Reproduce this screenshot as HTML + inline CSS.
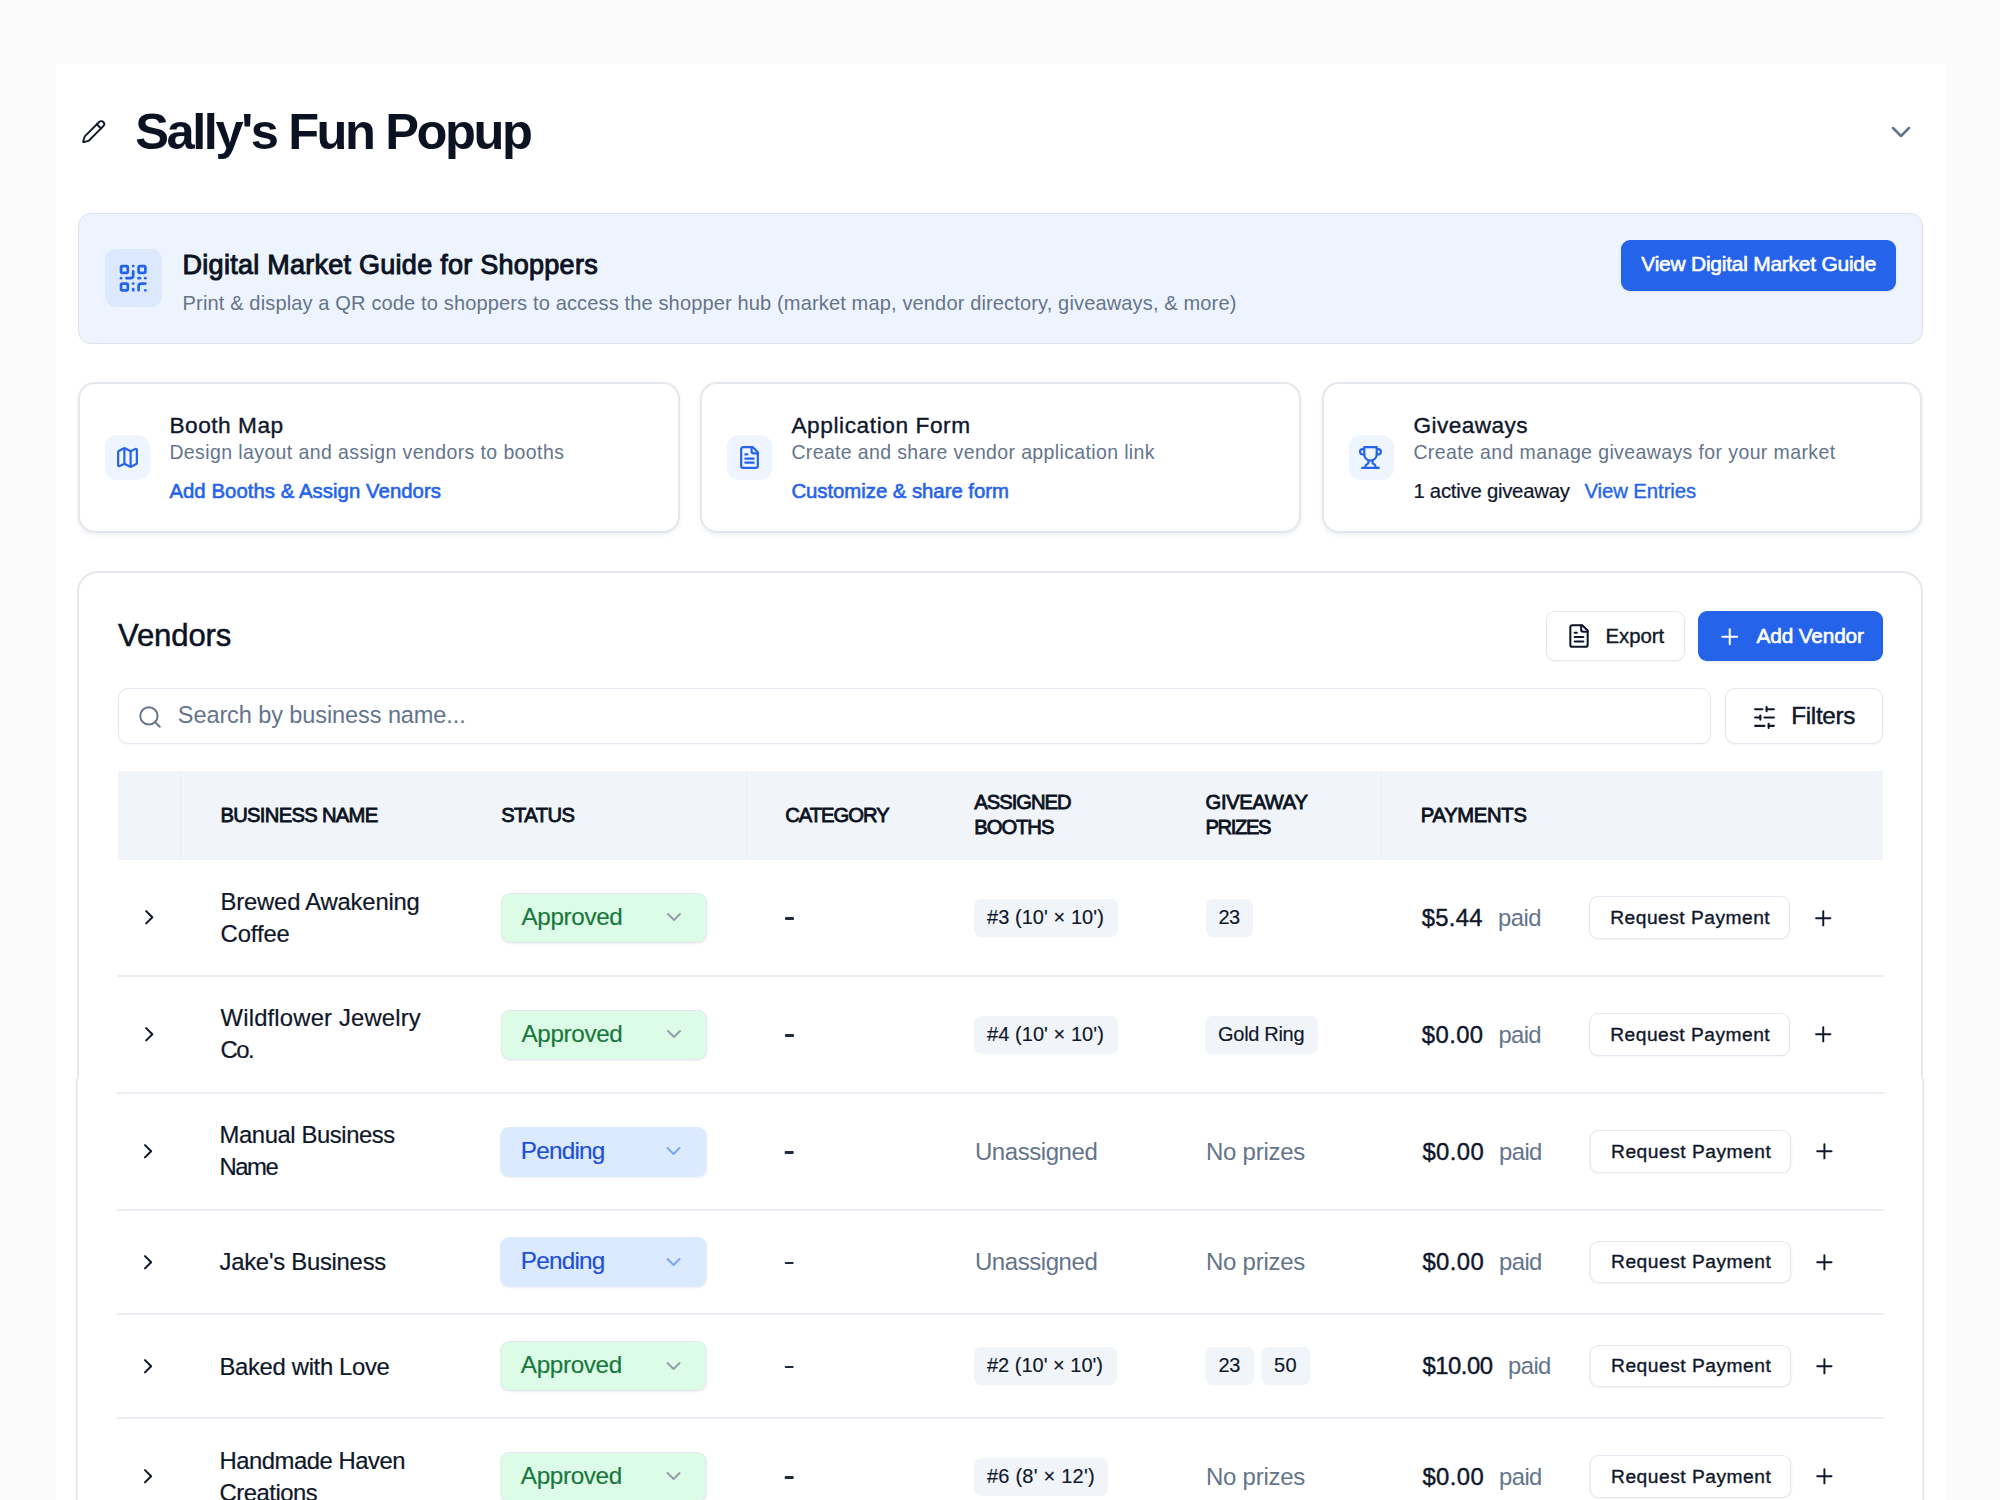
<!DOCTYPE html>
<html><head><meta charset="utf-8"><style>
html,body{margin:0;padding:0;}
body{width:2000px;height:1500px;overflow:hidden;position:relative;background-color:#fbfbfc;
font-family:"Liberation Sans", sans-serif;}
.t{position:absolute;white-space:nowrap;line-height:1;}
.r{position:absolute;}
.i{position:absolute;overflow:visible;}
</style></head><body>
<div class="r" style="left:56px;top:63.6px;width:1889.5px;height:1436.4px;background:#ffffff;"></div>
<svg class="i" style="left:80.6px;top:118.9px;" width="25.3" height="25.3" viewBox="0 0 24 24" fill="none" stroke="#0f172a" stroke-width="1.75" stroke-linecap="round" stroke-linejoin="round"><path d="M21.174 6.812a1 1 0 0 0-3.986-3.987L3.842 16.174a2 2 0 0 0-.5.83l-1.321 4.352a.5.5 0 0 0 .623.622l4.353-1.32a2 2 0 0 0 .83-.497z"/><path d="m15 5 4 4"/></svg>
<div class="t" style="left:135.20px;top:106.88px;font-size:50.58px;letter-spacing:-2.420px;color:#0b1222;font-weight:700;">Sally's Fun Popup</div>
<svg class="i" style="left:1885px;top:116px;" width="32" height="32" viewBox="0 0 24 24" fill="none" stroke="#64748b" stroke-width="1.9" stroke-linecap="round" stroke-linejoin="round"><path d="m6 9 6 6 6-6"/></svg>
<div class="r" style="left:78px;top:213px;width:1845px;height:131px;background:#eef4fe;border:1.5px solid #dde3ec;border-radius:13px;box-sizing:border-box;"></div>
<div class="r" style="left:105px;top:249px;width:57px;height:58px;background:#dbe8fe;border-radius:11px;"></div>
<svg class="i" style="left:117px;top:261.5px;" width="32.4" height="32.4" viewBox="0 0 24 24" fill="none" stroke="#2563eb" stroke-width="2" stroke-linecap="round" stroke-linejoin="round"><rect width="5" height="5" x="3" y="3" rx="1"/><rect width="5" height="5" x="16" y="3" rx="1"/><rect width="5" height="5" x="3" y="16" rx="1"/><path d="M21 16h-3a2 2 0 0 0-2 2v3"/><path d="M21 21v.01"/><path d="M12 7v3a2 2 0 0 1-2 2H7"/><path d="M3 12h.01"/><path d="M12 3h.01"/><path d="M12 16v.01"/><path d="M16 12h1"/><path d="M21 12v.01"/><path d="M12 21v-1"/></svg>
<div class="t" style="left:182.60px;top:251.51px;font-size:27.03px;letter-spacing:0.254px;color:#0b1222;font-weight:400;-webkit-text-stroke:0.95px #0b1222;">Digital Market Guide for Shoppers</div>
<div class="t" style="left:182.60px;top:292.82px;font-size:20.06px;letter-spacing:0.130px;color:#64748b;font-weight:400;">Print &amp; display a QR code to shoppers to access the shopper hub (market map, vendor directory, giveaways, &amp; more)</div>
<div class="r" style="left:1621px;top:240px;width:275px;height:51px;background:#2563eb;border-radius:9px;box-shadow:0 1px 2px rgba(0,0,0,.08);"></div>
<div class="t" style="left:1641.30px;top:253.58px;font-size:20.93px;letter-spacing:-0.216px;color:#ffffff;font-weight:400;-webkit-text-stroke:0.6px #ffffff;">View Digital Market Guide</div>
<div class="r" style="left:78px;top:382px;width:602px;height:151px;background:#fff;border:2px solid #e3e8ef;border-radius:17px;box-sizing:border-box;box-shadow:0 2px 4px rgba(15,23,42,.07);"></div>
<div class="r" style="left:105px;top:435px;width:45px;height:45px;background:#eff5ff;border-radius:12px;"></div>
<svg class="i" style="left:115.2px;top:445px;" width="25" height="25" viewBox="0 0 24 24" fill="none" stroke="#2563eb" stroke-width="2.1" stroke-linecap="round" stroke-linejoin="round"><path d="M14.106 5.553a2 2 0 0 0 1.788 0l3.659-1.83A1 1 0 0 1 21 4.619v12.764a1 1 0 0 1-.553.894l-4.553 2.277a2 2 0 0 1-1.788 0l-4.212-2.106a2 2 0 0 0-1.788 0l-3.659 1.83A1 1 0 0 1 3 19.381V6.618a1 1 0 0 1 .553-.894l4.553-2.277a2 2 0 0 1 1.788 0z"/><path d="M15 5.764v15"/><path d="M9 3.236v15"/></svg>
<div class="t" style="left:169.40px;top:413.81px;font-size:22.67px;letter-spacing:0.521px;color:#0f172a;font-weight:400;-webkit-text-stroke:0.35px #0f172a;">Booth Map</div>
<div class="t" style="left:169.40px;top:443.11px;font-size:19.48px;letter-spacing:0.409px;color:#64748b;font-weight:400;">Design layout and assign vendors to booths</div>
<div class="t" style="left:169.40px;top:481.37px;font-size:20.35px;letter-spacing:0.049px;color:#2563eb;font-weight:400;-webkit-text-stroke:0.6px #2563eb;">Add Booths &amp; Assign Vendors</div>
<div class="r" style="left:700px;top:382px;width:601px;height:151px;background:#fff;border:2px solid #e3e8ef;border-radius:17px;box-sizing:border-box;box-shadow:0 2px 4px rgba(15,23,42,.07);"></div>
<div class="r" style="left:727px;top:435px;width:45px;height:45px;background:#eff5ff;border-radius:12px;"></div>
<svg class="i" style="left:737.2px;top:445px;" width="25" height="25" viewBox="0 0 24 24" fill="none" stroke="#2563eb" stroke-width="2.1" stroke-linecap="round" stroke-linejoin="round"><path d="M15 2H6a2 2 0 0 0-2 2v16a2 2 0 0 0 2 2h12a2 2 0 0 0 2-2V7Z"/><path d="M14 2v4a2 2 0 0 0 2 2h4"/><path d="M10 9H8"/><path d="M16 13H8"/><path d="M16 17H8"/></svg>
<div class="t" style="left:791.40px;top:413.81px;font-size:22.67px;letter-spacing:0.582px;color:#0f172a;font-weight:400;-webkit-text-stroke:0.35px #0f172a;">Application Form</div>
<div class="t" style="left:791.40px;top:443.11px;font-size:19.48px;letter-spacing:0.374px;color:#64748b;font-weight:400;">Create and share vendor application link</div>
<div class="t" style="left:791.40px;top:481.37px;font-size:20.35px;letter-spacing:-0.035px;color:#2563eb;font-weight:400;-webkit-text-stroke:0.6px #2563eb;">Customize &amp; share form</div>
<div class="r" style="left:1322px;top:382px;width:600px;height:151px;background:#fff;border:2px solid #e3e8ef;border-radius:17px;box-sizing:border-box;box-shadow:0 2px 4px rgba(15,23,42,.07);"></div>
<div class="r" style="left:1349px;top:435px;width:45px;height:45px;background:#eff5ff;border-radius:12px;"></div>
<svg class="i" style="left:1357.9px;top:445px;" width="25" height="25" viewBox="0 0 24 24" fill="none" stroke="#2563eb" stroke-width="2.1" stroke-linecap="round" stroke-linejoin="round"><path d="M6 9H4.5a2.5 2.5 0 0 1 0-5H6"/><path d="M18 9h1.5a2.5 2.5 0 0 0 0-5H18"/><path d="M4 22h16"/><path d="M10 14.66V17c0 .55-.47.98-.97 1.21C7.85 18.75 7 20.24 7 22"/><path d="M14 14.66V17c0 .55.47.98.97 1.21C16.15 18.75 17 20.24 17 22"/><path d="M18 2H6v7a6 6 0 0 0 12 0V2Z"/></svg>
<div class="t" style="left:1413.40px;top:413.81px;font-size:22.67px;letter-spacing:0.428px;color:#0f172a;font-weight:400;-webkit-text-stroke:0.35px #0f172a;">Giveaways</div>
<div class="t" style="left:1413.40px;top:443.11px;font-size:19.48px;letter-spacing:0.404px;color:#64748b;font-weight:400;">Create and manage giveaways for your market</div>
<div class="t" style="left:1413.40px;top:481.37px;font-size:20.35px;letter-spacing:-0.253px;color:#0f172a;font-weight:400;-webkit-text-stroke:0.2px #0f172a;">1 active giveaway</div>
<div class="t" style="left:1584.40px;top:481.37px;font-size:20.35px;letter-spacing:-0.085px;color:#2563eb;font-weight:400;-webkit-text-stroke:0.35px #2563eb;">View Entries</div>
<div class="r" style="left:0;top:0;width:2000px;height:1079px;overflow:hidden;">
<div class="r" style="left:77px;top:571px;width:1846px;height:989px;background:#fff;border:2px solid #e3e8ef;border-radius:21px;box-sizing:border-box;"></div>
</div>
<div class="r" style="left:0;top:1079px;width:2000px;height:421px;overflow:hidden;"><div class="r" style="left:0;top:-1079px;width:2000px;height:1500px;transform:scaleX(1.0014);transform-origin:1000px 0;">
<div class="r" style="left:77px;top:571px;width:1846px;height:989px;background:#fff;border:2px solid #e3e8ef;border-radius:21px;box-sizing:border-box;"></div>
</div></div>
<div class="t" style="left:118.00px;top:620.27px;font-size:31.10px;letter-spacing:-0.126px;color:#0b1222;font-weight:400;-webkit-text-stroke:0.5px #0b1222;">Vendors</div>
<div class="r" style="left:1546px;top:611px;width:139px;height:50px;background:#fff;border:1.5px solid #e2e8f0;border-radius:9px;box-sizing:border-box;box-shadow:0 1px 2px rgba(15,23,42,.05);"></div>
<svg class="i" style="left:1566px;top:623px;" width="26" height="26" viewBox="0 0 24 24" fill="none" stroke="#0f172a" stroke-width="1.9" stroke-linecap="round" stroke-linejoin="round"><path d="M15 2H6a2 2 0 0 0-2 2v16a2 2 0 0 0 2 2h12a2 2 0 0 0 2-2V7Z"/><path d="M14 2v4a2 2 0 0 0 2 2h4"/><path d="M10 9H8"/><path d="M16 13H8"/><path d="M16 17H8"/></svg>
<div class="t" style="left:1605.50px;top:626.27px;font-size:20.35px;letter-spacing:-0.042px;color:#0f172a;font-weight:400;-webkit-text-stroke:0.35px #0f172a;">Export</div>
<div class="r" style="left:1698px;top:611px;width:185px;height:50px;background:#2563eb;border-radius:9px;box-shadow:0 1px 2px rgba(0,0,0,.08);"></div>
<svg class="i" style="left:1717px;top:623.5px;" width="25.5" height="25.5" viewBox="0 0 24 24" fill="none" stroke="#ffffff" stroke-width="1.9" stroke-linecap="round" stroke-linejoin="round"><path d="M5 12h14"/><path d="M12 5v14"/></svg>
<div class="t" style="left:1756.60px;top:625.91px;font-size:20.78px;letter-spacing:-0.133px;color:#ffffff;font-weight:400;-webkit-text-stroke:0.6px #ffffff;">Add Vendor</div>
<div class="r" style="left:118px;top:688px;width:1593px;height:56px;background:#fff;border:1.5px solid #e2e8f0;border-radius:10px;box-sizing:border-box;box-shadow:0 1px 2px rgba(15,23,42,.05);"></div>
<svg class="i" style="left:136.5px;top:703.5px;" width="26" height="26" viewBox="0 0 24 24" fill="none" stroke="#64748b" stroke-width="1.8" stroke-linecap="round" stroke-linejoin="round"><circle cx="11" cy="11" r="8"/><path d="m21 21-4.3-4.3"/></svg>
<div class="t" style="left:177.80px;top:704.27px;font-size:23.55px;letter-spacing:-0.103px;color:#64748b;font-weight:400;">Search by business name...</div>
<div class="r" style="left:1725px;top:688px;width:158px;height:56px;background:#fff;border:1.5px solid #e2e8f0;border-radius:10px;box-sizing:border-box;box-shadow:0 1px 2px rgba(15,23,42,.05);"></div>
<svg class="i" style="left:1752px;top:704.5px;" width="25" height="25" viewBox="0 0 24 24" fill="none" stroke="#0f172a" stroke-width="2" stroke-linecap="round" stroke-linejoin="round"><line x1="21" x2="14" y1="4" y2="4"/><line x1="10" x2="3" y1="4" y2="4"/><line x1="21" x2="12" y1="12" y2="12"/><line x1="8" x2="3" y1="12" y2="12"/><line x1="21" x2="16" y1="20" y2="20"/><line x1="12" x2="3" y1="20" y2="20"/><line x1="14" x2="14" y1="2" y2="6"/><line x1="8" x2="8" y1="10" y2="14"/><line x1="16" x2="16" y1="18" y2="22"/></svg>
<div class="t" style="left:1791.30px;top:703.85px;font-size:24.27px;letter-spacing:-0.337px;color:#0f172a;font-weight:400;-webkit-text-stroke:0.45px #0f172a;">Filters</div>
<div class="r" style="left:118px;top:771px;width:1765px;height:89px;background:#f1f5f9;"></div>
<div class="r" style="left:180px;top:771px;width:1px;height:89px;background:#e8edf3;"></div>
<div class="r" style="left:746px;top:771px;width:1px;height:89px;background:#e8edf3;"></div>
<div class="r" style="left:1381px;top:771px;width:1px;height:89px;background:#e8edf3;"></div>
<div class="t" style="left:220.40px;top:804.80px;font-size:20.20px;letter-spacing:-0.689px;color:#0b1222;font-weight:400;-webkit-text-stroke:0.8px #0b1222;">BUSINESS NAME</div>
<div class="t" style="left:501.20px;top:804.80px;font-size:20.20px;letter-spacing:-0.574px;color:#0b1222;font-weight:400;-webkit-text-stroke:0.8px #0b1222;">STATUS</div>
<div class="t" style="left:785.30px;top:804.80px;font-size:20.20px;letter-spacing:-1.018px;color:#0b1222;font-weight:400;-webkit-text-stroke:0.8px #0b1222;">CATEGORY</div>
<div class="t" style="left:974.30px;top:791.60px;font-size:20.20px;letter-spacing:-1.022px;color:#0b1222;font-weight:400;-webkit-text-stroke:0.8px #0b1222;">ASSIGNED</div>
<div class="t" style="left:974.30px;top:816.80px;font-size:20.20px;letter-spacing:-1.032px;color:#0b1222;font-weight:400;-webkit-text-stroke:0.8px #0b1222;">BOOTHS</div>
<div class="t" style="left:1205.50px;top:791.60px;font-size:20.20px;letter-spacing:-0.322px;color:#0b1222;font-weight:400;-webkit-text-stroke:0.8px #0b1222;">GIVEAWAY</div>
<div class="t" style="left:1205.50px;top:816.80px;font-size:20.20px;letter-spacing:-1.367px;color:#0b1222;font-weight:400;-webkit-text-stroke:0.8px #0b1222;">PRIZES</div>
<div class="t" style="left:1420.80px;top:804.80px;font-size:20.20px;letter-spacing:-0.284px;color:#0b1222;font-weight:400;-webkit-text-stroke:0.8px #0b1222;">PAYMENTS</div>
<div class="r" style="left:118px;top:975px;width:1765px;height:2px;background:#e9eef4;"></div>
<svg class="i" style="left:137px;top:905.3px;" width="24.5" height="24.5" viewBox="0 0 24 24" fill="none" stroke="#0f172a" stroke-width="2" stroke-linecap="round" stroke-linejoin="round"><path d="m9 18 6-6-6-6"/></svg>
<div class="t" style="left:220.60px;top:889.52px;font-size:23.84px;letter-spacing:-0.199px;color:#0f172a;font-weight:400;-webkit-text-stroke:0.2px #0f172a;">Brewed Awakening</div>
<div class="t" style="left:220.60px;top:921.52px;font-size:23.84px;letter-spacing:-0.109px;color:#0f172a;font-weight:400;-webkit-text-stroke:0.2px #0f172a;">Coffee</div>
<div class="r" style="left:501px;top:892.8px;width:206px;height:50.0px;background:#dcfce7;border:1.5px solid #e3e8ee;border-radius:9px;box-sizing:border-box;box-shadow:0 1px 2px rgba(15,23,42,.07);"></div>
<div class="t" style="left:521.50px;top:905.25px;font-size:24.27px;letter-spacing:-0.370px;color:#18773b;font-weight:400;-webkit-text-stroke:0.15px #18773b;">Approved</div>
<svg class="i" style="left:662px;top:905.4px;" width="24" height="24" viewBox="0 0 24 24" fill="none" stroke="#979eab" stroke-width="2.0" stroke-linecap="round" stroke-linejoin="round"><path d="m6 9 6 6 6-6"/></svg>
<div class="r" style="left:785.3px;top:917.3px;width:8.300000000000068px;height:2.6000000000000227px;background:#1e293b;border-radius:1px;"></div>
<div class="r" style="left:974px;top:898.8px;width:143.5px;height:38.0px;background:#f1f5f9;border-radius:7px;"></div>
<div class="t" style="left:987.00px;top:906.88px;font-size:19.99px;letter-spacing:0.064px;color:#0f172a;font-weight:400;-webkit-text-stroke:0.15px #0f172a;">#3 (10' × 10')</div>
<div class="r" style="left:1205.5px;top:898.8px;width:47.5px;height:38.0px;background:#f1f5f9;border-radius:7px;"></div>
<div class="t" style="left:1218.50px;top:906.88px;font-size:19.99px;letter-spacing:-0.684px;color:#0f172a;font-weight:400;-webkit-text-stroke:0.15px #0f172a;">23</div>
<div class="t" style="left:1421.80px;top:905.82px;font-size:23.84px;letter-spacing:0.272px;color:#0f172a;font-weight:400;-webkit-text-stroke:0.4px #0f172a;">$5.44</div>
<div class="t" style="left:1498.00px;top:905.82px;font-size:23.84px;letter-spacing:-0.484px;color:#64748b;font-weight:400;">paid</div>
<div class="r" style="left:1589px;top:896.3px;width:201px;height:42.5px;background:#fff;border:1.5px solid #e2e8f0;border-radius:9px;box-sizing:border-box;box-shadow:0 1px 2px rgba(15,23,42,.05);"></div>
<div class="t" style="left:1610.20px;top:908.06px;font-size:19.19px;letter-spacing:0.498px;color:#0f172a;font-weight:400;-webkit-text-stroke:0.35px #0f172a;">Request Payment</div>
<svg class="i" style="left:1810.5px;top:905.5999999999999px;" width="24.5" height="24.5" viewBox="0 0 24 24" fill="none" stroke="#0f172a" stroke-width="1.9" stroke-linecap="round" stroke-linejoin="round"><path d="M5 12h14"/><path d="M12 5v14"/></svg>
<svg class="i" style="left:137px;top:1022.0px;" width="24.5" height="24.5" viewBox="0 0 24 24" fill="none" stroke="#0f172a" stroke-width="2" stroke-linecap="round" stroke-linejoin="round"><path d="m9 18 6-6-6-6"/></svg>
<div class="t" style="left:220.60px;top:1006.22px;font-size:23.84px;letter-spacing:0.166px;color:#0f172a;font-weight:400;-webkit-text-stroke:0.2px #0f172a;">Wildflower Jewelry</div>
<div class="t" style="left:220.60px;top:1038.22px;font-size:23.84px;letter-spacing:-1.533px;color:#0f172a;font-weight:400;-webkit-text-stroke:0.2px #0f172a;">Co.</div>
<div class="r" style="left:501px;top:1009.5px;width:206px;height:50.0px;background:#dcfce7;border:1.5px solid #e3e8ee;border-radius:9px;box-sizing:border-box;box-shadow:0 1px 2px rgba(15,23,42,.07);"></div>
<div class="t" style="left:521.50px;top:1021.95px;font-size:24.27px;letter-spacing:-0.370px;color:#18773b;font-weight:400;-webkit-text-stroke:0.15px #18773b;">Approved</div>
<svg class="i" style="left:662px;top:1022.1px;" width="24" height="24" viewBox="0 0 24 24" fill="none" stroke="#979eab" stroke-width="2.0" stroke-linecap="round" stroke-linejoin="round"><path d="m6 9 6 6 6-6"/></svg>
<div class="r" style="left:785.3px;top:1034.0px;width:8.300000000000068px;height:2.599999999999909px;background:#1e293b;border-radius:1px;"></div>
<div class="r" style="left:974px;top:1015.5px;width:143.5999999999999px;height:38.0px;background:#f1f5f9;border-radius:7px;"></div>
<div class="t" style="left:987.00px;top:1023.58px;font-size:19.99px;letter-spacing:0.068px;color:#0f172a;font-weight:400;-webkit-text-stroke:0.15px #0f172a;">#4 (10' × 10')</div>
<div class="r" style="left:1205.1px;top:1015.5px;width:112.90000000000009px;height:38.0px;background:#f1f5f9;border-radius:7px;"></div>
<div class="t" style="left:1218.10px;top:1023.58px;font-size:19.99px;letter-spacing:-0.304px;color:#0f172a;font-weight:400;-webkit-text-stroke:0.15px #0f172a;">Gold Ring</div>
<div class="t" style="left:1421.80px;top:1022.52px;font-size:23.84px;letter-spacing:0.422px;color:#0f172a;font-weight:400;-webkit-text-stroke:0.4px #0f172a;">$0.00</div>
<div class="t" style="left:1498.40px;top:1022.52px;font-size:23.84px;letter-spacing:-0.617px;color:#64748b;font-weight:400;">paid</div>
<div class="r" style="left:1589px;top:1013.0px;width:201px;height:42.5px;background:#fff;border:1.5px solid #e2e8f0;border-radius:9px;box-sizing:border-box;box-shadow:0 1px 2px rgba(15,23,42,.05);"></div>
<div class="t" style="left:1610.20px;top:1024.76px;font-size:19.19px;letter-spacing:0.498px;color:#0f172a;font-weight:400;-webkit-text-stroke:0.35px #0f172a;">Request Payment</div>
<svg class="i" style="left:1810.5px;top:1022.3px;" width="24.5" height="24.5" viewBox="0 0 24 24" fill="none" stroke="#0f172a" stroke-width="1.9" stroke-linecap="round" stroke-linejoin="round"><path d="M5 12h14"/><path d="M12 5v14"/></svg>
<div class="r" style="left:0;top:0;width:2000px;height:1500px;transform:scaleX(1.0014);transform-origin:1000px 0;">
<div class="r" style="left:118px;top:1209px;width:1765px;height:2px;background:#e9eef4;"></div>
<div class="r" style="left:118px;top:1092px;width:1765px;height:2px;background:#e9eef4;"></div>
<svg class="i" style="left:137px;top:1139.0px;" width="24.5" height="24.5" viewBox="0 0 24 24" fill="none" stroke="#0f172a" stroke-width="2" stroke-linecap="round" stroke-linejoin="round"><path d="m9 18 6-6-6-6"/></svg>
<div class="t" style="left:220.60px;top:1123.42px;font-size:23.84px;letter-spacing:-0.423px;color:#0f172a;font-weight:400;-webkit-text-stroke:0.2px #0f172a;">Manual Business</div>
<div class="t" style="left:220.60px;top:1155.42px;font-size:23.84px;letter-spacing:-1.482px;color:#0f172a;font-weight:400;-webkit-text-stroke:0.2px #0f172a;">Name</div>
<div class="r" style="left:501px;top:1126.5px;width:206px;height:50.0px;background:#dbeafe;border:none;border-radius:9px;box-sizing:border-box;box-shadow:0 1px 2px rgba(15,23,42,.07);"></div>
<div class="t" style="left:521.50px;top:1138.95px;font-size:24.27px;letter-spacing:-0.780px;color:#1d4ed8;font-weight:400;-webkit-text-stroke:0.15px #1d4ed8;">Pending</div>
<svg class="i" style="left:662px;top:1139.1px;" width="24" height="24" viewBox="0 0 24 24" fill="none" stroke="#7ea6f2" stroke-width="2.0" stroke-linecap="round" stroke-linejoin="round"><path d="m6 9 6 6 6-6"/></svg>
<div class="r" style="left:785.3px;top:1151.0px;width:8.300000000000068px;height:2.599999999999909px;background:#1e293b;border-radius:1px;"></div>
<div class="t" style="left:975.00px;top:1139.70px;font-size:23.98px;letter-spacing:-0.436px;color:#64748b;font-weight:400;">Unassigned</div>
<div class="t" style="left:1205.70px;top:1139.50px;font-size:23.98px;letter-spacing:-0.253px;color:#64748b;font-weight:400;">No prizes</div>
<div class="t" style="left:1421.80px;top:1139.52px;font-size:23.84px;letter-spacing:0.422px;color:#0f172a;font-weight:400;-webkit-text-stroke:0.4px #0f172a;">$0.00</div>
<div class="t" style="left:1498.40px;top:1139.52px;font-size:23.84px;letter-spacing:-0.617px;color:#64748b;font-weight:400;">paid</div>
<div class="r" style="left:1589px;top:1130.0px;width:201px;height:42.5px;background:#fff;border:1.5px solid #e2e8f0;border-radius:9px;box-sizing:border-box;box-shadow:0 1px 2px rgba(15,23,42,.05);"></div>
<div class="t" style="left:1610.20px;top:1141.76px;font-size:19.19px;letter-spacing:0.498px;color:#0f172a;font-weight:400;-webkit-text-stroke:0.35px #0f172a;">Request Payment</div>
<svg class="i" style="left:1810.5px;top:1139.3px;" width="24.5" height="24.5" viewBox="0 0 24 24" fill="none" stroke="#0f172a" stroke-width="1.9" stroke-linecap="round" stroke-linejoin="round"><path d="M5 12h14"/><path d="M12 5v14"/></svg>
<div class="r" style="left:118px;top:1313px;width:1765px;height:2px;background:#e9eef4;"></div>
<svg class="i" style="left:137px;top:1249.5px;" width="24.5" height="24.5" viewBox="0 0 24 24" fill="none" stroke="#0f172a" stroke-width="2" stroke-linecap="round" stroke-linejoin="round"><path d="m9 18 6-6-6-6"/></svg>
<div class="t" style="left:220.60px;top:1249.62px;font-size:23.84px;letter-spacing:-0.257px;color:#0f172a;font-weight:400;-webkit-text-stroke:0.2px #0f172a;">Jake's Business</div>
<div class="r" style="left:501px;top:1237px;width:206px;height:50px;background:#dbeafe;border:none;border-radius:9px;box-sizing:border-box;box-shadow:0 1px 2px rgba(15,23,42,.07);"></div>
<div class="t" style="left:521.50px;top:1249.45px;font-size:24.27px;letter-spacing:-0.780px;color:#1d4ed8;font-weight:400;-webkit-text-stroke:0.15px #1d4ed8;">Pending</div>
<svg class="i" style="left:662px;top:1249.6px;" width="24" height="24" viewBox="0 0 24 24" fill="none" stroke="#7ea6f2" stroke-width="2.0" stroke-linecap="round" stroke-linejoin="round"><path d="m6 9 6 6 6-6"/></svg>
<div class="r" style="left:785.3px;top:1261.5px;width:8.300000000000068px;height:2.599999999999909px;background:#1e293b;border-radius:1px;"></div>
<div class="t" style="left:975.00px;top:1250.20px;font-size:23.98px;letter-spacing:-0.436px;color:#64748b;font-weight:400;">Unassigned</div>
<div class="t" style="left:1205.70px;top:1250.00px;font-size:23.98px;letter-spacing:-0.253px;color:#64748b;font-weight:400;">No prizes</div>
<div class="t" style="left:1421.80px;top:1250.02px;font-size:23.84px;letter-spacing:0.422px;color:#0f172a;font-weight:400;-webkit-text-stroke:0.4px #0f172a;">$0.00</div>
<div class="t" style="left:1498.40px;top:1250.02px;font-size:23.84px;letter-spacing:-0.617px;color:#64748b;font-weight:400;">paid</div>
<div class="r" style="left:1589px;top:1240.5px;width:201px;height:42.5px;background:#fff;border:1.5px solid #e2e8f0;border-radius:9px;box-sizing:border-box;box-shadow:0 1px 2px rgba(15,23,42,.05);"></div>
<div class="t" style="left:1610.20px;top:1252.26px;font-size:19.19px;letter-spacing:0.498px;color:#0f172a;font-weight:400;-webkit-text-stroke:0.35px #0f172a;">Request Payment</div>
<svg class="i" style="left:1810.5px;top:1249.8px;" width="24.5" height="24.5" viewBox="0 0 24 24" fill="none" stroke="#0f172a" stroke-width="1.9" stroke-linecap="round" stroke-linejoin="round"><path d="M5 12h14"/><path d="M12 5v14"/></svg>
<div class="r" style="left:118px;top:1417px;width:1765px;height:2px;background:#e9eef4;"></div>
<svg class="i" style="left:137px;top:1353.5px;" width="24.5" height="24.5" viewBox="0 0 24 24" fill="none" stroke="#0f172a" stroke-width="2" stroke-linecap="round" stroke-linejoin="round"><path d="m9 18 6-6-6-6"/></svg>
<div class="t" style="left:220.60px;top:1354.62px;font-size:23.84px;letter-spacing:-0.340px;color:#0f172a;font-weight:400;-webkit-text-stroke:0.2px #0f172a;">Baked with Love</div>
<div class="r" style="left:501px;top:1341px;width:206px;height:50px;background:#dcfce7;border:1.5px solid #e3e8ee;border-radius:9px;box-sizing:border-box;box-shadow:0 1px 2px rgba(15,23,42,.07);"></div>
<div class="t" style="left:521.50px;top:1353.45px;font-size:24.27px;letter-spacing:-0.370px;color:#18773b;font-weight:400;-webkit-text-stroke:0.15px #18773b;">Approved</div>
<svg class="i" style="left:662px;top:1353.6px;" width="24" height="24" viewBox="0 0 24 24" fill="none" stroke="#979eab" stroke-width="2.0" stroke-linecap="round" stroke-linejoin="round"><path d="m6 9 6 6 6-6"/></svg>
<div class="r" style="left:785.3px;top:1365.5px;width:8.300000000000068px;height:2.599999999999909px;background:#1e293b;border-radius:1px;"></div>
<div class="r" style="left:974px;top:1347px;width:143.0999999999999px;height:38px;background:#f1f5f9;border-radius:7px;"></div>
<div class="t" style="left:987.00px;top:1355.08px;font-size:19.99px;letter-spacing:-0.009px;color:#0f172a;font-weight:400;-webkit-text-stroke:0.15px #0f172a;">#2 (10' × 10')</div>
<div class="r" style="left:1205.1px;top:1347px;width:48.5px;height:38px;background:#f1f5f9;border-radius:7px;"></div>
<div class="t" style="left:1218.10px;top:1355.08px;font-size:19.99px;letter-spacing:-0.284px;color:#0f172a;font-weight:400;-webkit-text-stroke:0.15px #0f172a;">23</div>
<div class="r" style="left:1260.5px;top:1347px;width:49.0px;height:38px;background:#f1f5f9;border-radius:7px;"></div>
<div class="t" style="left:1273.50px;top:1355.08px;font-size:19.99px;letter-spacing:0.516px;color:#0f172a;font-weight:400;-webkit-text-stroke:0.15px #0f172a;">50</div>
<div class="t" style="left:1421.80px;top:1354.02px;font-size:23.84px;letter-spacing:-0.468px;color:#0f172a;font-weight:400;-webkit-text-stroke:0.4px #0f172a;">$10.00</div>
<div class="t" style="left:1507.40px;top:1354.02px;font-size:23.84px;letter-spacing:-0.617px;color:#64748b;font-weight:400;">paid</div>
<div class="r" style="left:1589px;top:1344.5px;width:201px;height:42.5px;background:#fff;border:1.5px solid #e2e8f0;border-radius:9px;box-sizing:border-box;box-shadow:0 1px 2px rgba(15,23,42,.05);"></div>
<div class="t" style="left:1610.20px;top:1356.26px;font-size:19.19px;letter-spacing:0.498px;color:#0f172a;font-weight:400;-webkit-text-stroke:0.35px #0f172a;">Request Payment</div>
<svg class="i" style="left:1810.5px;top:1353.8px;" width="24.5" height="24.5" viewBox="0 0 24 24" fill="none" stroke="#0f172a" stroke-width="1.9" stroke-linecap="round" stroke-linejoin="round"><path d="M5 12h14"/><path d="M12 5v14"/></svg>
<div class="r" style="left:118px;top:1534px;width:1765px;height:2px;background:#e9eef4;"></div>
<svg class="i" style="left:137px;top:1464.0px;" width="24.5" height="24.5" viewBox="0 0 24 24" fill="none" stroke="#0f172a" stroke-width="2" stroke-linecap="round" stroke-linejoin="round"><path d="m9 18 6-6-6-6"/></svg>
<div class="t" style="left:220.60px;top:1448.82px;font-size:23.84px;letter-spacing:-0.487px;color:#0f172a;font-weight:400;-webkit-text-stroke:0.2px #0f172a;">Handmade Haven</div>
<div class="t" style="left:220.60px;top:1480.82px;font-size:23.84px;letter-spacing:-0.478px;color:#0f172a;font-weight:400;-webkit-text-stroke:0.2px #0f172a;">Creations</div>
<div class="r" style="left:501px;top:1451.5px;width:206px;height:50.0px;background:#dcfce7;border:1.5px solid #e3e8ee;border-radius:9px;box-sizing:border-box;box-shadow:0 1px 2px rgba(15,23,42,.07);"></div>
<div class="t" style="left:521.50px;top:1463.95px;font-size:24.27px;letter-spacing:-0.370px;color:#18773b;font-weight:400;-webkit-text-stroke:0.15px #18773b;">Approved</div>
<svg class="i" style="left:662px;top:1464.1px;" width="24" height="24" viewBox="0 0 24 24" fill="none" stroke="#979eab" stroke-width="2.0" stroke-linecap="round" stroke-linejoin="round"><path d="m6 9 6 6 6-6"/></svg>
<div class="r" style="left:785.3px;top:1476.0px;width:8.300000000000068px;height:2.599999999999909px;background:#1e293b;border-radius:1px;"></div>
<div class="r" style="left:974px;top:1457.5px;width:134.4000000000001px;height:38.0px;background:#f1f5f9;border-radius:7px;"></div>
<div class="t" style="left:987.00px;top:1465.58px;font-size:19.99px;letter-spacing:0.223px;color:#0f172a;font-weight:400;-webkit-text-stroke:0.15px #0f172a;">#6 (8' × 12')</div>
<div class="t" style="left:1205.70px;top:1464.50px;font-size:23.98px;letter-spacing:-0.253px;color:#64748b;font-weight:400;">No prizes</div>
<div class="t" style="left:1421.80px;top:1464.52px;font-size:23.84px;letter-spacing:0.422px;color:#0f172a;font-weight:400;-webkit-text-stroke:0.4px #0f172a;">$0.00</div>
<div class="t" style="left:1498.40px;top:1464.52px;font-size:23.84px;letter-spacing:-0.617px;color:#64748b;font-weight:400;">paid</div>
<div class="r" style="left:1589px;top:1455.0px;width:201px;height:42.5px;background:#fff;border:1.5px solid #e2e8f0;border-radius:9px;box-sizing:border-box;box-shadow:0 1px 2px rgba(15,23,42,.05);"></div>
<div class="t" style="left:1610.20px;top:1466.76px;font-size:19.19px;letter-spacing:0.498px;color:#0f172a;font-weight:400;-webkit-text-stroke:0.35px #0f172a;">Request Payment</div>
<svg class="i" style="left:1810.5px;top:1464.3px;" width="24.5" height="24.5" viewBox="0 0 24 24" fill="none" stroke="#0f172a" stroke-width="1.9" stroke-linecap="round" stroke-linejoin="round"><path d="M5 12h14"/><path d="M12 5v14"/></svg>
</div>
</body></html>
